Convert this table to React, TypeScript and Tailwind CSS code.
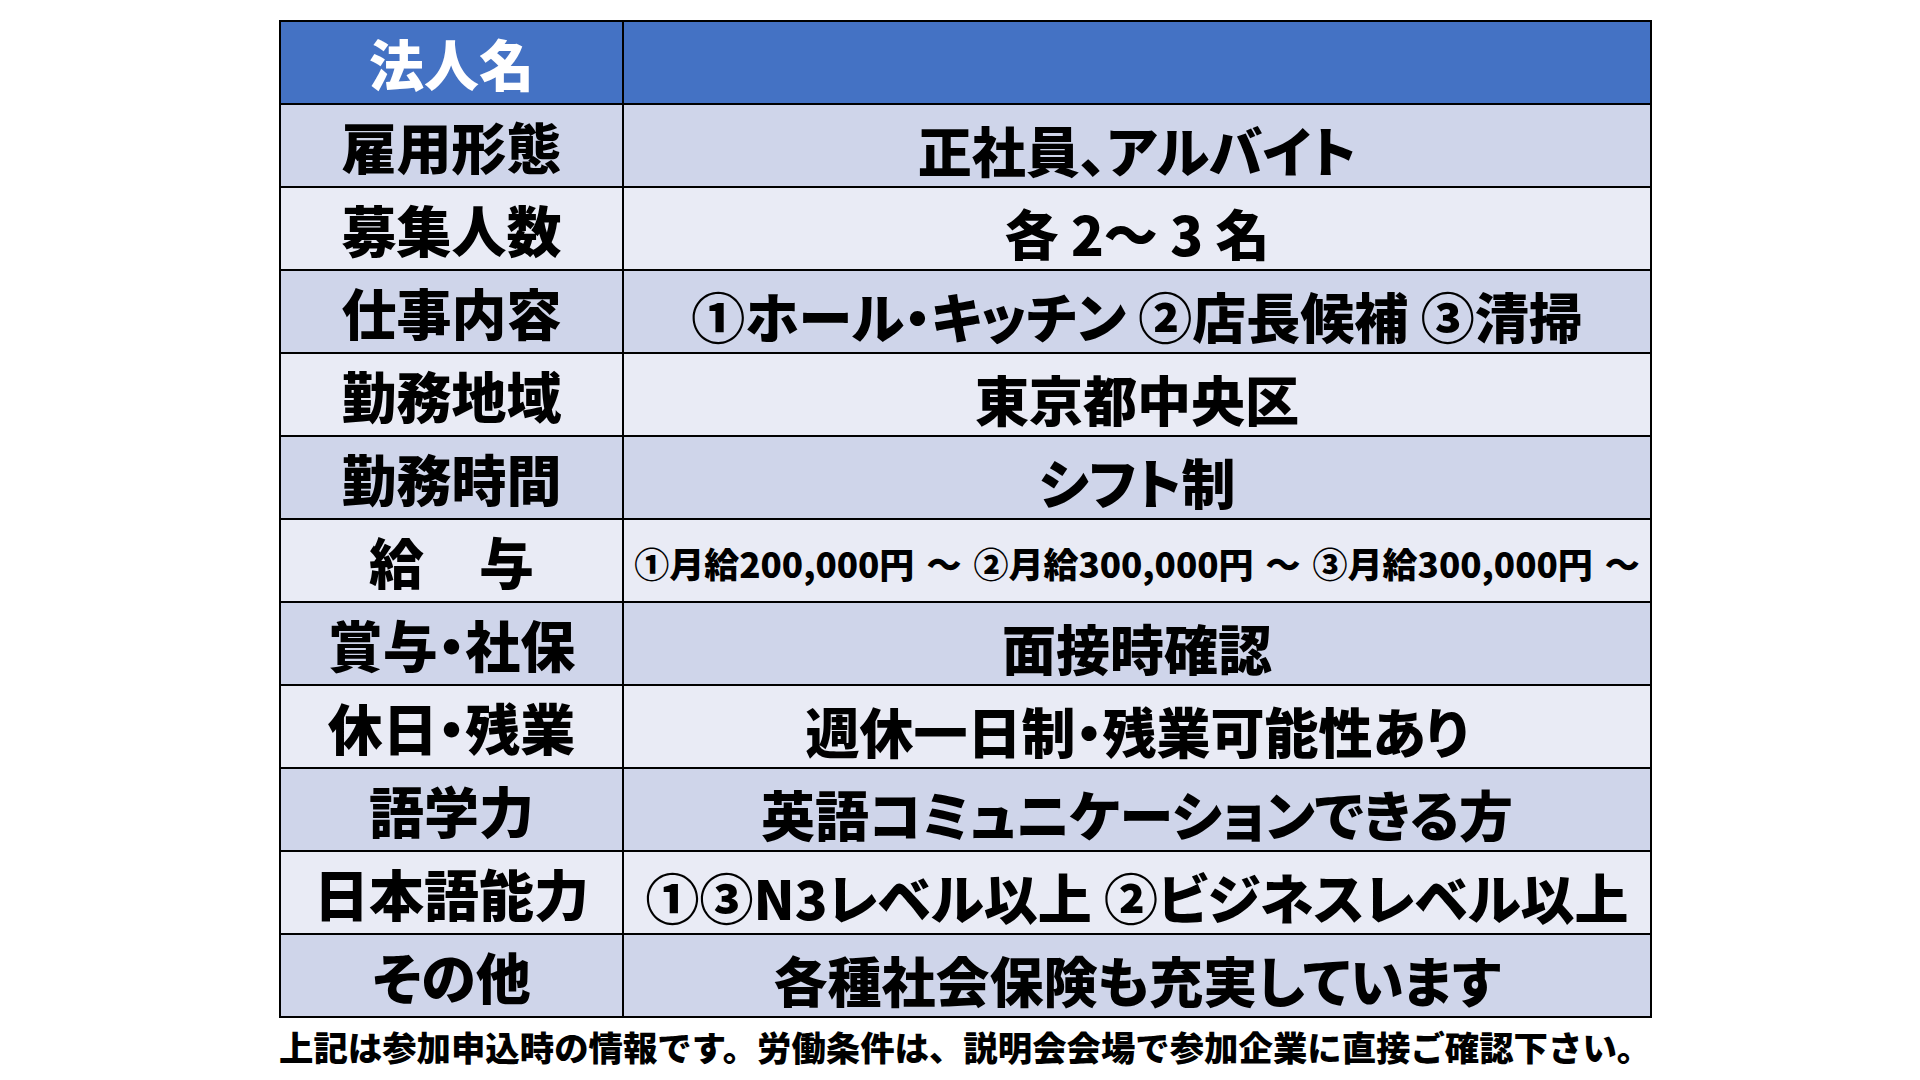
type Row = {
  label: string;
  value: string;
  small?: boolean;
};

const rows: Row[] = [
  { label: '雇用形態', value: '正社員、アルバイト' },
  { label: '募集人数', value: '各 2～ 3 名' },
  { label: '仕事内容', value: '①ホール・キッチン ②店長候補 ③清掃' },
  { label: '勤務地域', value: '東京都中央区' },
  { label: '勤務時間', value: 'シフト制' },
  { label: '給　与', value: '①月給200,000円 ～ ②月給300,000円 ～ ③月給300,000円 ～', small: true },
  { label: '賞与・社保', value: '面接時確認' },
  { label: '休日・残業', value: '週休一日制・残業可能性あり' },
  { label: '語学力', value: '英語コミュニケーションできる方' },
  { label: '日本語能力', value: '①③N3レベル以上 ②ビジネスレベル以上' },
  { label: 'その他', value: '各種社会保険も充実しています' },
];

const font = {
  fontFamily: '"Noto Sans CJK JP", "Noto Sans", sans-serif',
};

export default function App() {
  return (
    <div className="w-[1920px] h-[1080px] bg-white overflow-hidden" style={font}>
      <div className="pl-[279px] pt-[20px]">
        <table className="w-[1373px] border-collapse border-2 border-black table-fixed">
          <colgroup>
            <col className="w-[343px]" />
            <col />
          </colgroup>
          <tbody>
            <tr className="h-[83px] bg-[#4472c4]">
              <td className="border-2 border-black text-center text-white text-[55px] font-black leading-none">
                法人名
              </td>
              <td className="border-2 border-black"></td>
            </tr>
            {rows.map((row, i) => (
              <tr key={row.label} className={`h-[83px] ${i % 2 === 0 ? 'bg-[#cfd5ea]' : 'bg-[#e9ebf5]'}`}>
                <td className="border-2 border-black text-center text-black text-[55px] font-black leading-none whitespace-nowrap [font-feature-settings:'palt']">
                  {row.label}
                </td>
                {row.small ? (
                  <td className="border-2 border-black text-center text-black font-black leading-none whitespace-nowrap text-[35px] pt-[4px] [word-spacing:4px]">
                    {row.value}
                  </td>
                ) : (
                  <td className="border-2 border-black text-center text-black font-black leading-none whitespace-nowrap text-[54px] pt-[8px] [font-feature-settings:'palt']">
                    {row.value}
                  </td>
                )}
              </tr>
            ))}
          </tbody>
        </table>
        <p className="mt-[11px] text-[34.4px] font-black leading-none text-black whitespace-nowrap">
          上記は参加申込時の情報です。労働条件は、説明会会場で参加企業に直接ご確認下さい。
        </p>
      </div>
    </div>
  );
}
